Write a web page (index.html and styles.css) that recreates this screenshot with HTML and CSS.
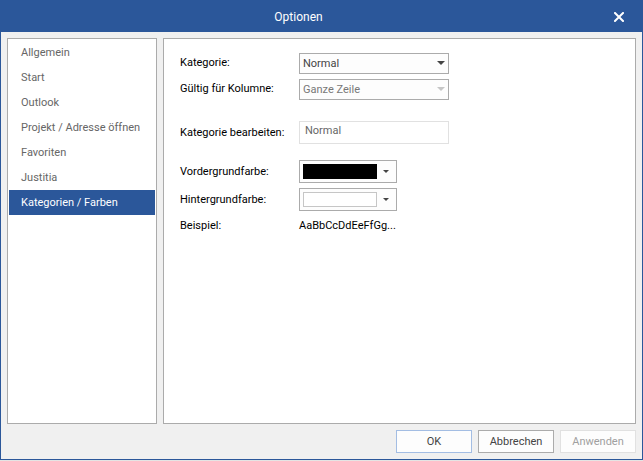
FILE: index.html
```html
<!DOCTYPE html>
<html lang="de">
<head>
<meta charset="utf-8">
<title>Optionen</title>
<link rel="stylesheet" href="styles.css">
</head>
<body>
<div class="dialog">
  <header class="titlebar">
    <h1 class="title">Optionen</h1>
    <button class="close" type="button" aria-label="Schließen">
      <svg width="10" height="10" viewBox="0 0 10 10" aria-hidden="true"><path d="M1 1l8 8M9 1l-8 8" stroke="currentColor" stroke-width="2" stroke-linecap="square"/></svg>
    </button>
  </header>
  <div class="panels">
    <nav class="sidebar">
      <a class="item" href="#">Allgemein</a>
      <a class="item" href="#">Start</a>
      <a class="item" href="#">Outlook</a>
      <a class="item" href="#">Projekt / Adresse öffnen</a>
      <a class="item" href="#">Favoriten</a>
      <a class="item" href="#">Justitia</a>
      <a class="item selected" href="#" aria-current="page">Kategorien / Farben</a>
    </nav>
    <main class="content">
      <form class="form">
        <div class="group choose">
          <div class="row">
            <label class="label" for="category">Kategorie:</label>
            <div class="combo">
              <select class="select" id="category"><option>Normal</option></select>
              <svg class="arrow" width="8" height="4" viewBox="0 0 8 4" aria-hidden="true"><path d="M0 0h8L4 4z" fill="currentColor"/></svg>
            </div>
          </div>
          <div class="row">
            <label class="label" for="column">Gültig für Kolumne:</label>
            <div class="combo disabled">
              <select class="select" id="column" disabled><option>Ganze Zeile</option></select>
              <svg class="arrow" width="8" height="4" viewBox="0 0 8 4" aria-hidden="true"><path d="M0 0h8L4 4z" fill="currentColor"/></svg>
            </div>
          </div>
        </div>
        <div class="group edit">
          <div class="row">
            <label class="label" for="name">Kategorie bearbeiten:</label>
            <input class="input" id="name" type="text" value="Normal">
          </div>
        </div>
        <div class="group colors">
          <div class="row">
            <label class="label" for="fore">Vordergrundfarbe:</label>
            <button class="color" id="fore" type="button">
              <span class="swatch black"></span>
              <svg width="6" height="3" viewBox="0 0 6 3" aria-hidden="true"><path d="M0 0h6L3 3z" fill="currentColor"/></svg>
            </button>
          </div>
          <div class="row">
            <label class="label" for="back">Hintergrundfarbe:</label>
            <button class="color" id="back" type="button">
              <span class="swatch"></span>
              <svg width="6" height="3" viewBox="0 0 6 3" aria-hidden="true"><path d="M0 0h6L3 3z" fill="currentColor"/></svg>
            </button>
          </div>
          <div class="row">
            <span class="label">Beispiel:</span>
            <span class="sample">AaBbCcDdEeFfGg...</span>
          </div>
        </div>
      </form>
    </main>
  </div>
  <footer class="actions">
    <button class="button primary" type="button">OK</button>
    <button class="button" type="button">Abbrechen</button>
    <button class="button" type="button" disabled>Anwenden</button>
  </footer>
</div>
</body>
</html>
```
FILE: styles.css
```css
* {
  box-sizing: border-box;
}

body {
  margin: 0;
  padding-bottom: 1px;
  height: 100vh;
  background: #e4e4e4;
  font-family: Roboto, "Liberation Sans", sans-serif;
  font-size: 11px;
  line-height: 15px;
  color: #000;
}

button,
input,
select {
  font: inherit;
}

.dialog {
  display: flex;
  flex-direction: column;
  height: 100%;
  border: 1px solid #2b579a;
  border-top: 0;
  background: #f0f0f0;
}

.titlebar {
  display: grid;
  grid-template-columns: 1fr auto 1fr;
  align-items: center;
  height: 32px;
  padding: 2px 18px 0;
  background: #2b579a;
  color: #fff;
}

.title {
  grid-column: 2;
  margin: 0;
  padding-right: 46px;
  font-size: 12px;
  font-weight: 400;
}

.close {
  display: flex;
  justify-self: end;
  padding: 0;
  border: 0;
  background: none;
  color: #fff;
}

.panels {
  display: flex;
  flex: 1;
  gap: 6px;
  min-height: 0;
  padding: 6px 6px 0;
}

.sidebar {
  width: 150px;
  padding: 1px;
  border: 1px solid #ababab;
  background: #fff;
}

.item {
  display: block;
  overflow: hidden;
  padding: 5px 12px;
  white-space: nowrap;
  color: #666;
  text-decoration: none;
}

.selected {
  background: #2b579a;
  color: #fff;
}

.content {
  flex: 1;
  padding: 14px 16px;
  border: 1px solid #ababab;
  background: #fff;
}

.form {
  display: flex;
  flex-direction: column;
}

.group {
  display: flex;
  flex-direction: column;
  gap: 5px;
}

.edit {
  margin-top: 21px;
}

.colors {
  margin-top: 16px;
}

.row {
  display: flex;
  align-items: center;
  min-height: 19px;
}

.label {
  width: 119px;
}

.choose .label {
  padding-bottom: 2px;
}

.combo {
  position: relative;
  width: 150px;
  color: #444;
}

.select {
  appearance: none;
  display: block;
  width: 100%;
  height: 21px;
  padding: 0 18px 0 3px;
  border: 1px solid #ababab;
  border-radius: 0;
  background: #fdfdfd;
  color: #444;
  opacity: 1;
}

.disabled .select {
  color: #777;
}

.disabled {
  color: #c6c6c6;
}

.arrow {
  position: absolute;
  top: 8px;
  right: 4px;
  pointer-events: none;
}

.input {
  width: 150px;
  height: 23px;
  padding: 0 5px 4px;
  border: 1px solid #e1e1e1;
  background: #fff;
  color: #666;
}

.color {
  display: flex;
  align-items: center;
  gap: 6px;
  width: 98px;
  height: 23px;
  padding: 0 3px;
  border: 1px solid #ababab;
  background: #fdfdfd;
  color: #444;
}

.swatch {
  width: 74px;
  height: 15px;
  border: 1px solid #c6c6c6;
  background: #fff;
}

.black {
  border-color: #000;
  background: #000;
}

.actions {
  display: flex;
  justify-content: flex-end;
  gap: 6px;
  padding: 6px;
}

.button {
  width: 76px;
  height: 23px;
  padding: 0;
  border: 1px solid #ababab;
  background: #fdfdfd;
  color: #444;
}

.primary {
  border-color: #a3bde3;
}

.button:disabled {
  border-color: #e1e1e1;
  color: #a0a0a0;
}
```
